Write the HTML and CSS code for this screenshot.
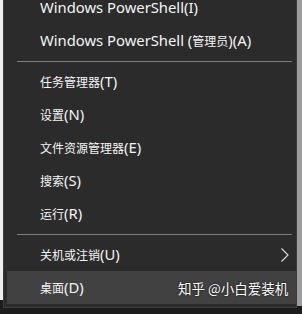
FILE: index.html
```html
<!DOCTYPE html>
<html>
<head>
<meta charset="utf-8">
<link rel="stylesheet" href="styles.css">
</head>
<body>
<div class="frame">
  <div class="left-strip"></div>
  <div class="menu">
    <div class="item">Windows PowerShell(I)</div>
    <div class="item">Windows PowerShell (<span class="zh">管理员</span>)(A)</div>
    <div class="sep"></div>
    <div class="item"><span class="zh">任务管理器</span>(T)</div>
    <div class="item"><span class="zh">设置</span>(N)</div>
    <div class="item"><span class="zh">文件资源管理器</span>(E)</div>
    <div class="item"><span class="zh">搜索</span>(S)</div>
    <div class="item"><span class="zh">运行</span>(R)</div>
    <div class="sep"></div>
    <div class="item"><span class="zh">关机或注销</span>(U)<svg class="chev" width="10" height="16" viewBox="0 0 10 16"><path d="M1.5 1.5 L8 8 L1.5 14.5" fill="none" stroke="#d8d8d8" stroke-width="1.2"/></svg></div>
    <div class="item active"><span class="zh">桌面</span>(D)<span class="watermark">知乎 @小白爱装机</span></div>
  </div>
  <div class="right-strip"></div>
</div>
</body>
</html>
```
FILE: styles.css
```css
html, body {
  margin: 0;
  padding: 0;
}
body {
  width: 302px;
  height: 314px;
  overflow: hidden;
  background: #1c1c1c;
  font-family: "Noto Sans", "Noto Sans CJK SC", sans-serif;
}
.frame {
  display: flex;
  align-items: flex-start;
  height: 306px;
}
.left-strip {
  width: 3px;
  height: 300px;
  background: #efefef;
}
.menu {
  width: 294px;
  height: 318px;
  margin-top: -10px;
  background: #2b2b2b;
  border: 1px solid #3c3c3c;
  box-sizing: border-box;
  padding: 0 0 0 3px;
  overflow: hidden;
}
.right-strip {
  width: 5px;
  height: 306px;
  background: #9c9c9c;
}
.item {
  height: 33px;
  line-height: 33px;
  padding-left: 33px;
  font-size: 14.8px;
  color: #f4f4f4;
  position: relative;
  white-space: nowrap;
}
.zh {
  font-family: "Noto Sans CJK SC", sans-serif;
  font-size: 12px;
}
.sep {
  height: 8px;
  display: flex;
  align-items: center;
  padding: 0 4px 0 10px;
}
.sep::before {
  content: "";
  flex: 1;
  height: 1px;
  background: #7d7d7d;
}
.chev {
  position: absolute;
  left: 273px;
  top: 9px;
}
.active {
  background: #414141;
}
.watermark {
  position: absolute;
  left: 171px;
  top: 1px;
  line-height: 33px;
  font-family: "Noto Sans CJK SC", sans-serif;
  font-size: 13.5px;
  color: #ffffff;
  text-shadow: 0 0 2px #000;
}
```
